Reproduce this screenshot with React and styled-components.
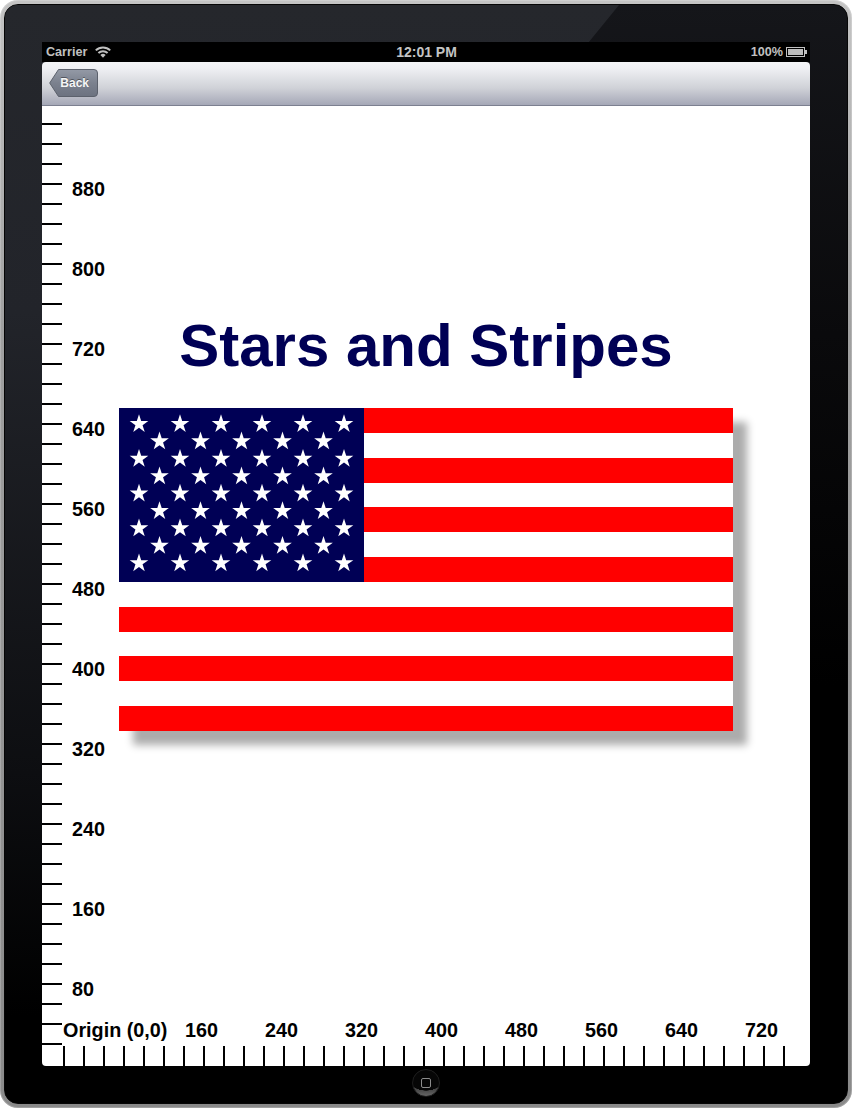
import React from 'react'
import styled, { createGlobalStyle } from 'styled-components'

const GlobalStyle = createGlobalStyle`
  html, body {
    margin: 0;
    padding: 0;
    background: #fff;
  }
  * {
    box-sizing: border-box;
  }
`

const yLabels = [880, 800, 720, 640, 560, 480, 400, 320, 240, 160, 80]
const xLabels = [160, 240, 320, 400, 480, 560, 640, 720]
const stripes = Array.from({ length: 13 }, (_, i) => i % 2 === 0)
const leftTicks = Array.from({ length: 47 })
const bottomTicks = Array.from({ length: 37 })

const starPoints = (cx, cy, r) => {
  const pts = []
  for (let i = 0; i < 10; i++) {
    const rad = i % 2 === 0 ? r : r * 0.382
    const a = (Math.PI / 5) * i - Math.PI / 2
    pts.push(`${(cx + rad * Math.cos(a)).toFixed(2)},${(cy + rad * Math.sin(a)).toFixed(2)}`)
  }
  return pts.join(' ')
}

function App() {
  const stars = []
  for (let row = 0; row < 9; row++) {
    const odd = row % 2 === 1
    const count = odd ? 5 : 6
    for (let col = 0; col < count; col++) {
      const x = 20 + col * 41 + (odd ? 20.5 : 0)
      const y = 16 + row * 17.4
      stars.push(<polygon key={`${row}-${col}`} points={starPoints(x, y, 9.8)} fill="#fff" />)
    }
  }

  return (
    <Device>
      <GlobalStyle />
      <Bezel>
        <StatusBar>
          <Carrier>
            <span>Carrier</span>
            <svg width="16" height="12" viewBox="0 0 16 12">
              <path d="M0.8 4.4 A10.2 10.2 0 0 1 15.2 4.4" fill="none" stroke="#c0c0c0" strokeWidth="2" />
              <path d="M3.4 7 A6.6 6.6 0 0 1 12.6 7" fill="none" stroke="#c0c0c0" strokeWidth="2" />
              <path d="M8 11.8 L5.4 9 A3.6 3.6 0 0 1 10.6 9 Z" fill="#c0c0c0" />
            </svg>
          </Carrier>
          <Clock>12:01 PM</Clock>
          <Battery>
            <span>100%</span>
            <svg width="21" height="10" viewBox="0 0 21 10">
              <rect x="0.5" y="0.5" width="18" height="9" fill="none" stroke="#c0c0c0" />
              <rect x="2" y="2" width="15" height="6" fill="#bdbdbd" />
              <rect x="19" y="3" width="2" height="4" fill="#c0c0c0" />
            </svg>
          </Battery>
        </StatusBar>
        <NavBar>
          <BackButton>
            <svg width="49" height="28" viewBox="0 0 49 28">
              <defs>
                <linearGradient id="backFill" x1="0" y1="0" x2="0" y2="1">
                  <stop offset="0" stopColor="#949aa6" />
                  <stop offset="0.5" stopColor="#7b818e" />
                  <stop offset="1" stopColor="#6c7280" />
                </linearGradient>
              </defs>
              <path
                d="M9.5 .5 H45 a3.5 3.5 0 0 1 3.5 3.5 V24 a3.5 3.5 0 0 1 -3.5 3.5 H9.5 L.7 14 Z"
                fill="url(#backFill)"
                stroke="#5c616c"
              />
            </svg>
            <BackLabel>Back</BackLabel>
          </BackButton>
        </NavBar>
        <Canvas>
          <LeftRuler>
            {leftTicks.map((_, i) => <HTick key={i} />)}
          </LeftRuler>
          <Drawing>
            <Plot>
              <YAxis>
                {yLabels.map(v => <YLabel key={v}>{v}</YLabel>)}
              </YAxis>
              <Figure>
                <Title>Stars and Stripes</Title>
                <Flag>
                  {stripes.map((red, i) => <Stripe key={i} $red={red} />)}
                  <Canton>
                    <svg width="245" height="174" viewBox="0 0 245 174">{stars}</svg>
                  </Canton>
                </Flag>
              </Figure>
            </Plot>
            <XAxis>
              <OriginLabel>Origin (0,0)</OriginLabel>
              {xLabels.map(v => <XLabel key={v}>{v}</XLabel>)}
            </XAxis>
            <BottomRuler>
              {bottomTicks.map((_, i) => <VTick key={i} />)}
            </BottomRuler>
          </Drawing>
        </Canvas>
        <HomeRow>
          <HomeButton>
            <HomeSquare />
          </HomeButton>
        </HomeRow>
      </Bezel>
    </Device>
  )
}

export default App

const Device = styled.div`
  width: 852px;
  height: 1108px;
  padding: 4px;
  border-radius: 18px;
  background: linear-gradient(180deg, #c4c4c4 0, #a0a0a0 30%, #8a8a8a 100%);
  box-shadow: inset 0 0 0 1px rgba(255, 255, 255, 0.2);
  font-family: "Liberation Sans", Arial, sans-serif;
`

const Bezel = styled.div`
  position: relative;
  isolation: isolate;
  height: 100%;
  padding: 37px 37px 0;
  border: 1px solid #060606;
  border-radius: 14px;
  overflow: hidden;
  background: linear-gradient(180deg, #15161a 0, #0a0a0c 30%, #000 62%);

  /* lighter glass reflection on the upper left */
  &::before {
    content: '';
    position: absolute;
    inset: 0;
    z-index: -1;
    background: linear-gradient(180deg, #25272c 0, #22242a 28%, #0d0e11 70%, #000 92%);
    clip-path: polygon(0 0, 614px 0, 60px 680px, 60px 1000px, 0 1098px);
  }
`

const StatusBar = styled.div`
  height: 20px;
  background: #000;
  color: #c0c0c0;
  display: grid;
  grid-template-columns: 1fr auto 1fr;
  align-items: center;
  padding: 0 3px 0 4px;
  font-weight: bold;
`

const Carrier = styled.div`
  display: flex;
  align-items: center;
  gap: 8px;
  font-size: 12.6px;
`

const Clock = styled.div`
  font-size: 14px;
  color: #c4c4c4;
`

const Battery = styled.div`
  display: flex;
  align-items: center;
  justify-content: flex-end;
  gap: 3px;
  font-size: 12.6px;
`

const NavBar = styled.div`
  height: 44px;
  display: flex;
  align-items: center;
  padding-left: 7px;
  border-radius: 4px 4px 0 0;
  border-bottom: 1px solid #7c8090;
  background: linear-gradient(180deg, #f4f5f7 0, #eff0f3 15%, #d0d2d8 60%, #a5a8b7 100%);
`

const BackButton = styled.div`
  position: relative;
  width: 49px;
  height: 28px;
  margin-top: -1px;
  display: flex;
  align-items: center;
  justify-content: flex-end;
  padding-right: 9px;

  svg {
    position: absolute;
    top: 0;
    left: 0;
  }
`

const BackLabel = styled.span`
  position: relative;
  color: #f6f6f6;
  font-size: 12px;
  font-weight: bold;
  text-shadow: 0 -1px 0 rgba(0, 0, 0, 0.4);
`

const Canvas = styled.div`
  height: 960px;
  display: flex;
  background: #fff;
  border-radius: 0 0 4px 4px;
  overflow: hidden;
`

const LeftRuler = styled.div`
  width: 20px;
  padding-top: 17px;
  display: flex;
  flex-direction: column;
  gap: 18px;
  flex: none;
`

const HTick = styled.div`
  width: 20px;
  height: 2px;
  background: #000;
`

const Drawing = styled.div`
  flex: 1;
  min-width: 0;
  display: flex;
  flex-direction: column;
`

const Plot = styled.div`
  height: 914px;
  display: flex;
`

const YAxis = styled.div`
  width: 57px;
  padding: 73px 0 0 10px;
  display: flex;
  flex-direction: column;
  gap: 60px;
  flex: none;
`

const YLabel = styled.div`
  height: 20px;
  line-height: 20px;
  font-size: 19.8px;
  font-weight: bold;
  color: #000;
`

const Figure = styled.div`
  width: 614px;
  padding-top: 205px;
  flex: none;
`

const Title = styled.h1`
  margin: 0 0 27px;
  height: 70px;
  line-height: 70px;
  text-align: center;
  font-size: 60px;
  font-weight: bold;
  color: #000055;
  white-space: nowrap;
`

const Flag = styled.div`
  position: relative;
  width: 614px;
  height: 323px;
  display: flex;
  flex-direction: column;
  box-shadow: 14px 14px 8px #acacac;
`

const Stripe = styled.div`
  flex: 1;
  background: ${props => (props.$red ? '#ff0000' : '#fff')};
`

const Canton = styled.div`
  position: absolute;
  top: 0;
  left: 0;
  width: 245px;
  height: 174px;
  background: #000055;

  svg {
    display: block;
  }
`

const XAxis = styled.div`
  height: 26px;
  padding-bottom: 6px;
  display: flex;
  align-items: center;
  font-size: 19.8px;
  font-weight: bold;
  color: #000;
`

const OriginLabel = styled.div`
  margin-left: 1px;
  width: 122px;
  flex: none;
  white-space: nowrap;
`

const XLabel = styled.div`
  width: 80px;
  flex: none;
`

const BottomRuler = styled.div`
  height: 20px;
  display: flex;
  gap: 18px;
  padding-left: 1px;
`

const VTick = styled.div`
  width: 2px;
  height: 20px;
  background: #000;
  flex: none;
`

const HomeRow = styled.div`
  display: flex;
  justify-content: center;
  padding-top: 3px;
`

const HomeButton = styled.div`
  width: 28px;
  height: 28px;
  border-radius: 50%;
  display: flex;
  align-items: center;
  justify-content: center;
  border: 1px solid #1c1c1c;
  background:
    radial-gradient(ellipse 19px 15px at 50% 22%, #060606 98%, transparent 100%),
    linear-gradient(180deg, #333 0, #3a3a3a 65%, #666 100%);
`

const HomeSquare = styled.div`
  width: 10px;
  height: 10px;
  border: 1px solid #8c8c8c;
  border-radius: 2px;
`
